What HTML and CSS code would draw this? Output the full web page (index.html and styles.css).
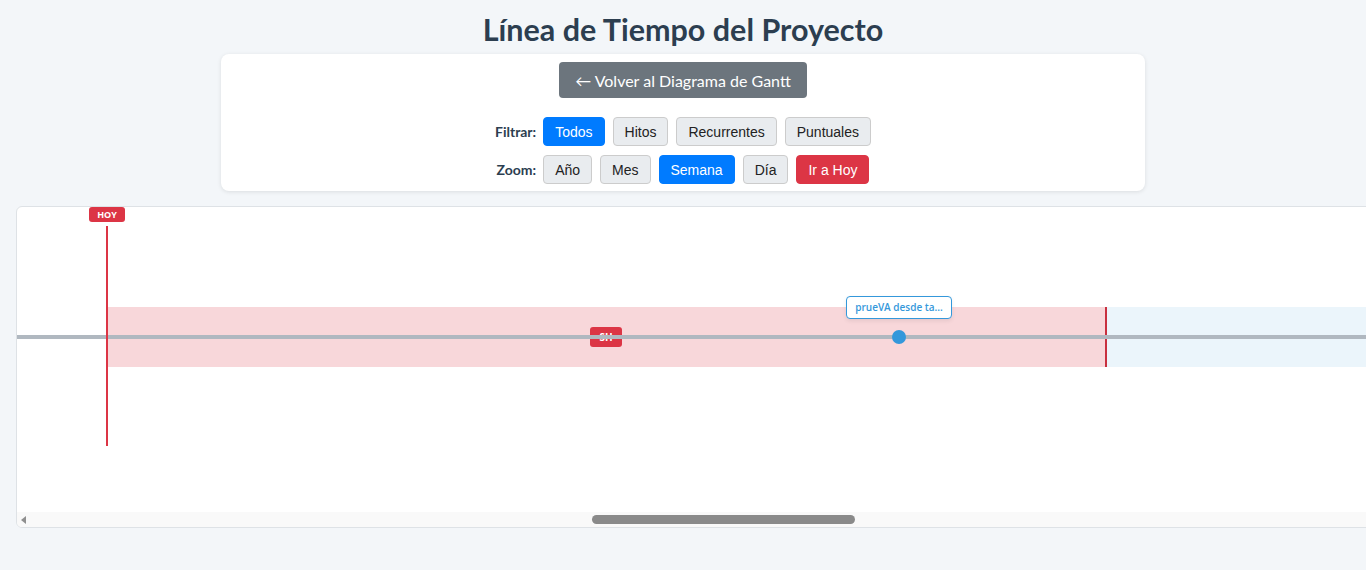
FILE: index.html
```html
<!DOCTYPE html>
<html>
<head>
  <title>Línea de Tiempo del Proyecto</title>
  <link rel="stylesheet" href="styles.css">
</head>
<body>
  <h1>Línea de Tiempo del Proyecto</h1>
  <div class="controls">
    <button class="back-btn">← Volver al Diagrama de Gantt</button>
    <div class="control-row">
      <span class="control-label">Filtrar:</span>
      <button class="btn active">Todos</button>
      <button class="btn">Hitos</button>
      <button class="btn">Recurrentes</button>
      <button class="btn">Puntuales</button>
    </div>
    <div class="control-row">
      <span class="control-label">Zoom:</span>
      <button class="btn">Año</button>
      <button class="btn">Mes</button>
      <button class="btn active">Semana</button>
      <button class="btn">Día</button>
      <button class="btn today">Ir a Hoy</button>
    </div>
  </div>

  <div class="timeline">
    <div class="timeline-view" id="timelineView">
      <div class="timeline-canvas">
        <div class="range range-past" style="left: 3067px; width: 998px;"></div>
        <div class="range-end" style="left: 4065px;"></div>
        <div class="range range-future" style="left: 4067px; width: 700px;"></div>
        <div class="range-label" style="left: 3550px;">SH</div>
        <div class="axis"></div>
        <div class="today-line" style="left: 3066px;"></div>
        <div class="today-badge" style="left: 3049px;">HOY</div>
        <div class="event-label" style="left: 3806px;">prueVA desde ta...</div>
        <div class="event-dot" style="left: 3852px;"></div>
      </div>
    </div>
    <div class="scrollbar">
      <span class="scroll-arrow"></span>
      <span class="scroll-thumb" style="margin-left: 566px; width: 263px;"></span>
    </div>
  </div>

  <script>
    document.getElementById('timelineView').scrollLeft = 2977;
  </script>
</body>
</html>
```

FILE: styles.css
```css
body {
  background-color: #f3f6f9;
  font-family: Lato, "Open Sans", sans-serif;
  color: #2c3e50;
  margin: 0;
  padding: 0 16px;
  overflow-x: hidden;
}

h1 {
  margin: 0;
  padding: 10px 0 6px;
  line-height: 38px;
  font-size: 30.5px;
  font-weight: bold;
  text-align: center;
  color: #2c3e50;
}

.controls {
  width: 924px;
  box-sizing: border-box;
  margin: 0 auto;
  padding: 8px 20px 7px;
  background-color: #fff;
  border-radius: 8px;
  box-shadow: 0 1px 4px rgba(0, 0, 0, 0.1);
  display: flex;
  flex-direction: column;
  align-items: center;
  gap: 9px;
}

.back-btn {
  background-color: #6c757d;
  color: #fff;
  border: none;
  border-radius: 4px;
  height: 36px;
  padding: 0 16px;
  font-family: Lato, "Open Sans", sans-serif;
  font-size: 16px;
  margin-bottom: 10px;
  cursor: pointer;
}

.control-row {
  display: flex;
  align-items: center;
  gap: 8px;
}

.control-label {
  font-size: 14px;
  font-weight: bold;
  color: #2c3e50;
  margin-right: -1px;
}

.btn {
  background-color: #e9ecef;
  color: #222;
  border: 1px solid #ccc;
  border-radius: 4px;
  height: 29px;
  padding: 0 11px;
  font-family: "Liberation Sans", Arial, sans-serif;
  font-size: 14px;
  cursor: pointer;
}

.btn.active {
  background-color: #007bff;
  border-color: #007bff;
  color: #fff;
}

.btn.today {
  background-color: #dc3545;
  border-color: #dc3545;
  color: #fff;
}

.timeline {
  margin-top: 15px;
  width: 1400px;
  background-color: #fff;
  border: 1px solid #dee2e6;
  border-radius: 6px;
  overflow: hidden;
}

.timeline-view {
  height: 305px;
  overflow: hidden;
}

.timeline-canvas {
  position: relative;
  width: 7272px;
  height: 305px;
}

.range {
  position: absolute;
  top: 100px;
  height: 60px;
}

.range-past {
  background-color: #f8d7da;
}

.range-future {
  background-color: #ebf5fb;
}

.range-end {
  position: absolute;
  top: 100px;
  width: 2px;
  height: 60px;
  background-color: #c8303f;
}

.range-label {
  position: absolute;
  top: 120px;
  width: 32px;
  height: 20px;
  line-height: 20px;
  background-color: #dc3545;
  color: #fff;
  border-radius: 3px;
  font-family: "Open Sans", sans-serif;
  font-size: 10px;
  font-weight: bold;
  text-align: center;
}

.axis {
  position: absolute;
  left: 0;
  right: 0;
  top: 128px;
  height: 4px;
  background-color: #b0b8c0;
}

.today-line {
  position: absolute;
  top: 19px;
  width: 2px;
  height: 220px;
  background-color: #dc3545;
}

.today-badge {
  position: absolute;
  top: 0;
  width: 36px;
  height: 15px;
  line-height: 15px;
  background-color: #dc3545;
  color: #fff;
  border-radius: 3px;
  font-family: "Open Sans", sans-serif;
  font-size: 9px;
  font-weight: bold;
  text-align: center;
}

.event-dot {
  position: absolute;
  top: 123px;
  width: 14px;
  height: 14px;
  border-radius: 50%;
  background-color: #3498db;
}

.event-label {
  position: absolute;
  top: 89px;
  width: 106px;
  height: 23px;
  line-height: 21px;
  box-sizing: border-box;
  background-color: #fff;
  border: 1px solid #3498db;
  border-radius: 4px;
  box-shadow: 0 2px 4px rgba(0, 0, 0, 0.08);
  color: #3498db;
  font-family: "Open Sans", sans-serif;
  font-size: 10px;
  font-weight: 600;
  text-align: center;
  white-space: nowrap;
}

.scrollbar {
  height: 15px;
  background-color: #f9f9f9;
  display: flex;
  align-items: center;
}

.scroll-arrow {
  margin-left: 4px;
  width: 0;
  height: 0;
  border-top: 4px solid transparent;
  border-bottom: 4px solid transparent;
  border-right: 5px solid #8f8f8f;
}

.scroll-thumb {
  height: 9px;
  border-radius: 5px;
  background-color: #8a8a8a;
}
```
